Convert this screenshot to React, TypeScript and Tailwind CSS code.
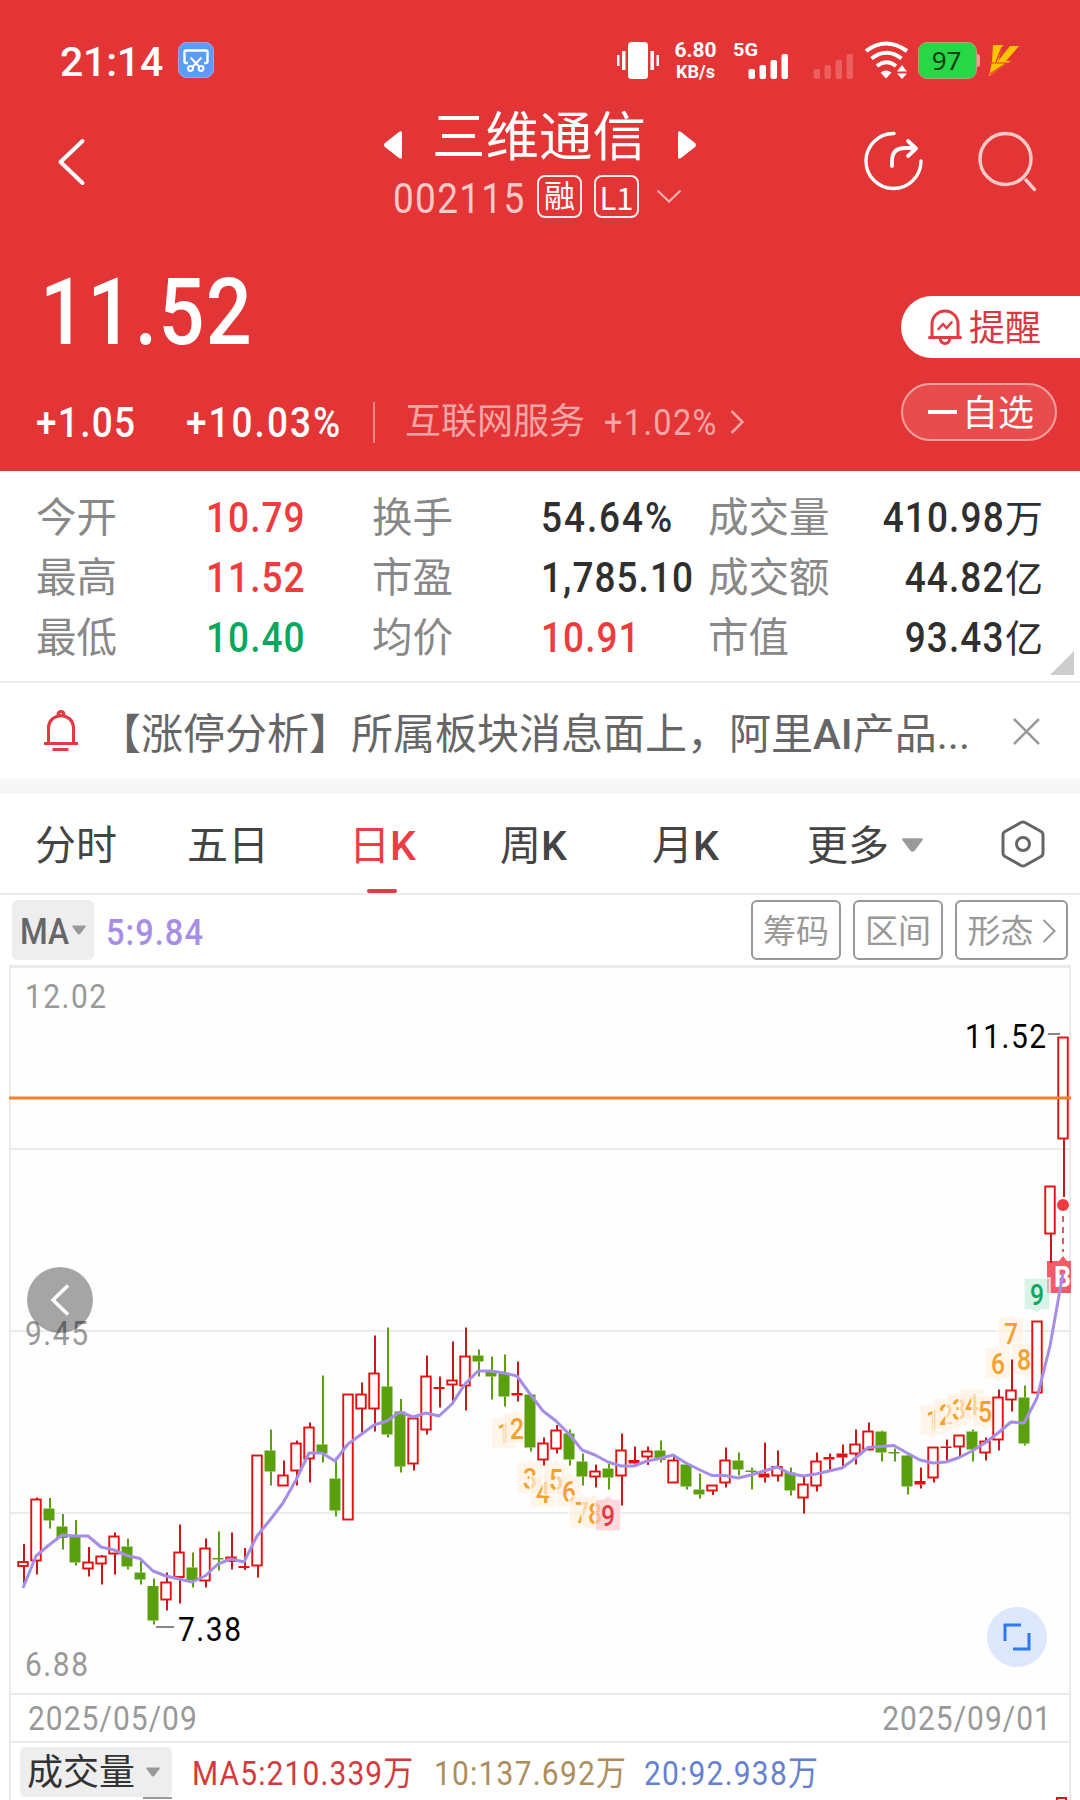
import type { ReactNode } from 'react';

type Candle = [high: number, low: number, top: number, bottom: number, kind: 'r' | 'g' | 'f'];

// r = hollow rising, g = falling, f = flat rising (filled)
const candles: Candle[] = [
  [1544, 1583, 1562, 1566, 'r'], [1497.5, 1574.5, 1499.5, 1560.5, 'r'], [1498, 1528.5, 1508.5, 1520.5, 'g'],
  [1514, 1549.5, 1526.5, 1538, 'g'], [1520, 1565.5, 1537, 1562.5, 'g'], [1547, 1576.5, 1562.5, 1568.5, 'r'],
  [1555, 1584.5, 1556.5, 1563.5, 'r'], [1532.5, 1574.5, 1536.5, 1553.5, 'r'], [1538.5, 1569.5, 1546.5, 1566.5, 'g'],
  [1561, 1584.5, 1572.5, 1579.5, 'g'], [1578.5, 1624.5, 1586, 1620.5, 'g'], [1572.5, 1610.5, 1582.5, 1599.5, 'r'],
  [1524.5, 1603.5, 1552.5, 1577, 'r'], [1552.5, 1587.5, 1567.5, 1580, 'g'], [1538.5, 1587.5, 1548.5, 1580.5, 'r'],
  [1531.5, 1570.5, 1558, 1559, 'g'], [1532.5, 1569.5, 1557.5, 1561, 'r'], [1548, 1570, 1566, 1568, 'f'],
  [1455.5, 1577.5, 1455.5, 1565.5, 'r'], [1429.5, 1485.5, 1450.5, 1471.5, 'g'], [1460.5, 1485.5, 1475.5, 1485.5, 'r'],
  [1440.5, 1485.5, 1443.5, 1470.5, 'r'], [1422.5, 1482.5, 1427.5, 1458.5, 'r'], [1375.5, 1462.5, 1444.5, 1453.5, 'g'],
  [1457.5, 1516.5, 1478.5, 1510.5, 'g'], [1394.5, 1519.5, 1394.5, 1519.5, 'r'], [1382.5, 1433, 1394.5, 1408.5, 'r'],
  [1335.5, 1431.5, 1373.5, 1408.5, 'r'], [1327.5, 1437.5, 1386.5, 1434.5, 'g'], [1399, 1472.5, 1411.5, 1466.5, 'g'],
  [1418.5, 1470.5, 1418.5, 1463.5, 'r'], [1355.5, 1434.5, 1376.5, 1429.5, 'r'], [1376.5, 1407.5, 1387, 1389, 'f'],
  [1341.5, 1401, 1380.5, 1384.5, 'r'], [1327.5, 1410.5, 1356.5, 1385.5, 'r'], [1349.5, 1376.5, 1355.5, 1361.5, 'g'],
  [1356.5, 1399.5, 1371, 1376.5, 'g'], [1354.5, 1406.5, 1373.5, 1396.5, 'g'], [1361.5, 1401.5, 1393, 1395.5, 'f'],
  [1394.5, 1451.5, 1394.5, 1447.5, 'g'], [1437.5, 1465.5, 1443.5, 1459.5, 'r'], [1425, 1453.5, 1430.5, 1448.5, 'r'],
  [1429.5, 1465.5, 1433.5, 1459.5, 'g'], [1453.5, 1485.5, 1461.5, 1476.5, 'g'], [1464.5, 1487.5, 1471.5, 1476.5, 'r'],
  [1464, 1489.5, 1468.5, 1477.5, 'g'], [1433.5, 1505.5, 1450.5, 1475.5, 'r'], [1446.5, 1465, 1460, 1463.5, 'f'],
  [1446.5, 1465, 1451.5, 1456.5, 'r'], [1440.5, 1462.5, 1450.5, 1460, 'g'], [1457, 1482.5, 1460.5, 1482.5, 'r'],
  [1463, 1489.5, 1464.5, 1486.5, 'g'], [1473.5, 1498.5, 1489.5, 1494.5, 'g'], [1485, 1495, 1485.5, 1490.5, 'r'],
  [1447.5, 1487.5, 1460.5, 1482.5, 'r'], [1452.5, 1475.5, 1460.5, 1469.5, 'g'], [1467.5, 1489.5, 1470.5, 1471.5, 'g'],
  [1442.5, 1482.5, 1473.5, 1477.5, 'f'], [1450.5, 1481.5, 1467, 1475.5, 'r'], [1467.5, 1495.5, 1472.5, 1490.5, 'g'],
  [1477, 1513.5, 1484.5, 1497.5, 'r'], [1452.5, 1491.5, 1461.5, 1485.5, 'r'], [1453.5, 1470, 1457, 1459.5, 'f'],
  [1444.5, 1467, 1453.5, 1457.5, 'f'], [1429.5, 1464.5, 1444.5, 1453.5, 'r'], [1422.5, 1449, 1431.5, 1449.5, 'r'],
  [1430.5, 1461.5, 1431.5, 1452.5, 'g'], [1448.5, 1461.5, 1452, 1453, 'g'], [1453, 1494.5, 1455.5, 1486.5, 'g'],
  [1467.5, 1488.5, 1481, 1484.5, 'f'], [1447.5, 1482.5, 1447.5, 1477.5, 'r'], [1439.5, 1461.5, 1446.5, 1447.5, 'f'],
  [1435.5, 1457, 1435.5, 1446.5, 'r'], [1429.5, 1461.5, 1431.5, 1449.5, 'g'], [1437.5, 1460.5, 1441.5, 1452.5, 'r'],
  [1389.5, 1450.5, 1397.5, 1439.5, 'r'], [1359.5, 1411.5, 1390.5, 1399.5, 'r'], [1385.5, 1445.5, 1397.5, 1443.5, 'g'],
  [1321.5, 1392.5, 1321.5, 1392.5, 'r'], [1186.5, 1263, 1186.5, 1233.5, 'r'], [1037.5, 1197, 1037.5, 1138.5, 'r'],
];

const ma5 = [
  1588, 1556, 1545, 1535, 1536, 1536, 1547, 1550, 1555.5, 1558.5, 1571, 1576, 1579, 1582, 1576, 1564, 1559, 1562,
  1536, 1520, 1503, 1480, 1453, 1453, 1461, 1444, 1434.5, 1425, 1421, 1412, 1417, 1413, 1416, 1404, 1384, 1371,
  1371, 1373, 1376, 1394, 1411, 1421, 1434, 1450, 1455, 1462, 1466, 1466, 1461, 1458.5, 1455, 1463, 1469.5, 1475.5,
  1475.5, 1478, 1475, 1471, 1467, 1473.5, 1476, 1474, 1471, 1468, 1458.5, 1447.5, 1446.5, 1445.5, 1453, 1460, 1463,
  1462, 1457.5, 1451, 1443, 1433, 1422, 1423, 1398, 1346, 1273,
];

const cx = (i: number) => 23 + i * 13;

// [candle index, digit, box top, pointer direction]
const marks: [number, string, number, 'up' | 'down'][] = [
  [37, '1', 1417, 'up'], [38, '2', 1412, 'up'], [39, '3', 1462, 'up'], [40, '4', 1476, 'up'], [41, '5', 1463, 'up'],
  [42, '6', 1475, 'up'], [43, '7', 1496, 'up'], [44, '8', 1497, 'up'], [45, '9', 1499, 'up'],
  [70, '1', 1404, 'down'], [71, '2', 1398, 'down'], [72, '3', 1393, 'down'], [73, '4', 1388, 'down'],
  [74, '5', 1395, 'down'], [75, '6', 1347, 'down'], [76, '7', 1317, 'down'], [77, '8', 1343, 'down'],
  [78, '9', 1278, 'down'],
];

const markColor = (i: number) =>
  i === 45 ? ['#fbc6cb', '#e33a48'] : i === 78 ? ['#c3ecda', '#0da761'] : ['#fff0e1', '#f5a02c'];

function Mark({ i, digit, y, dir }: { i: number; digit: string; y: number; dir: 'up' | 'down' }) {
  const x = cx(i);
  const [bg, fg] = markColor(i);
  const d =
    dir === 'up'
      ? `M${x - 13} ${y}h9l4-4 4 4h9v32h-26z`
      : `M${x - 13} ${y}h26v32h-9l-4 4-4-4h-9z`;
  return (
    <g>
      <path d={d} fill={bg} fillOpacity={0.65} stroke="#fff" strokeOpacity={0.8} strokeWidth={1.5} />
      <text x={x} y={y + 27} fontSize={30} textAnchor="middle" fill={fg} fontWeight={500} textLength={14} lengthAdjust="spacingAndGlyphs">
        {digit}
      </text>
    </g>
  );
}

function Label({ x, y, w, fill, children }: { x: number; y: number; w: number; fill: string; children: string }) {
  return (
    <text transform={`translate(${x} ${y}) scale(0.88 1)`} fontSize={34} fill={fill} textLength={w / 0.88} lengthAdjust="spacing">
      {children}
    </text>
  );
}

function Chart() {
  return (
    <svg className="block h-[730px] w-[1080px] font-[Roboto,'Liberation_Sans',sans-serif]" viewBox="0 965 1080 730">
      <rect x="10" y="966" width="1060" height="728" fill="#fefefe" />
      <g fill="#ebebeb">
        <rect x="9" y="965" width="1062" height="3" />
        <rect x="9" y="965" width="2" height="730" />
        <rect x="1069" y="965" width="2" height="730" />
        <rect x="10" y="1148" width="1060" height="2" />
        <rect x="10" y="1330" width="1060" height="2" />
        <rect x="10" y="1512" width="1060" height="2" />
        <rect x="9" y="1693" width="1062" height="2" />
      </g>
      <Label x={25} y={1008} w={81} fill="#999">12.02</Label>
      <Label x={25} y={1345} w={63} fill="#999">9.45</Label>
      <Label x={25} y={1676} w={63} fill="#999">6.88</Label>

      <path d="M1047 1261h12l4-5 4 5h4v32h-24z" fill="#f45b69" />
      <text x="1054" y="1287" fontSize="29" fontWeight="700" fill="#fff" textLength="17" lengthAdjust="spacingAndGlyphs">B</text>
      {marks.map(([i, digit, y, dir]) => (
        <Mark key={i} i={i} digit={digit} y={y} dir={dir} />
      ))}

      {candles.map(([high, low, top, bottom, kind], i) => {
        const x = cx(i);
        const color = kind === 'g' ? '#5a9f0c' : '#e60f0f';
        const h = bottom - top;
        return (
          <g key={i}>
            {high < top && <rect x={x} y={high} width="2" height={top - high} fill={kind === 'g' ? color : '#c91818'} />}
            {low > bottom && <rect x={x} y={bottom} width="2" height={low - bottom} fill={kind === 'g' ? color : '#c91818'} />}
            {kind === 'r' ? (
              <rect x={x - 4.75} y={top} width="9.5" height={h} fill="#fff" fillOpacity={0.9} stroke={color} strokeWidth="1.9" />
            ) : (
              <rect x={x - 5.5} y={top} width="11" height={Math.max(h, 1.5)} fill={color} />
            )}
          </g>
        );
      })}

      <rect x="9" y="1096.5" width="1062" height="3" fill="#f5822b" />
      <circle cx="1063" cy="1205" r="6" fill="#f03a45" />
      <path d="M1063 1216v36" stroke="#e4566a" strokeWidth="2" strokeDasharray="6 5" />
      <polyline
        points={ma5.map((y, i) => `${cx(i)},${y}`).join(' ')}
        fill="none"
        stroke="#a68ee6"
        strokeWidth="3"
        strokeLinejoin="round"
      />

      <path d="M1048 1034h12M156 1627h18" stroke="#888" strokeWidth="2" />
      <Label x={965} y={1048} w={81} fill="#000">11.52</Label>
      <Label x={178} y={1641} w={63} fill="#000">7.38</Label>
    </svg>
  );
}

function Caret({ className }: { className: string }) {
  return (
    <svg className={className} viewBox="0 0 20 13" fill="#999">
      <path d="M1.5 0h17q2 0 1 2l-7.500 10q-2 2-4 0L.5 2q-1-2 1-2z" />
    </svg>
  );
}

// Narrow numerals, squeezed toward their left edge
function Num({ children, className = '' }: { children: ReactNode; className?: string }) {
  return <span className={`inline-block origin-left scale-x-[0.88] whitespace-nowrap ${className}`}>{children}</span>;
}

function StatusBar() {
  return (
    <div className="flex h-[102px] items-center pt-[18px] pl-[60px] text-white">
      <span className="w-[118px] pt-1 text-[41px] leading-none font-medium tracking-[-0.2px]">21:14</span>
      <svg className="h-9 w-9" viewBox="0 0 36 36" fill="none" stroke="#fff" strokeWidth="2.4">
        <rect x=".5" y=".5" width="35" height="35" rx="8" fill="#5b9cf8" stroke="#a4a5e0" strokeWidth="1" />
        <path d="M10 21H8q-1.500 0-1.500-1.500V10q0-1.500 1.500-1.500h20q1.500 0 1.500 1.500v9.500q0 1.500-1.500 1.500h-2" />
        <path d="M12.500 15.500l9.500 10M23.500 15.500l-9.500 10" strokeWidth="2" />
        <circle cx="12.500" cy="26.500" r="2.400" strokeWidth="2" />
        <circle cx="23" cy="26.500" r="2.400" strokeWidth="2" />
      </svg>
      <svg className="ml-[403px] h-[38px] w-[43px]" viewBox="0 0 43 38" fill="#fff">
        <rect x="11" y="1" width="20" height="37" rx="3.500" />
        <rect x="0" y="14" width="2.500" height="11" />
        <rect x="5" y="10" width="3.500" height="19" />
        <rect x="33.500" y="10" width="3.500" height="19" />
        <rect x="39.500" y="14" width="2.500" height="11" />
      </svg>
      <div className="ml-[13px] w-[45px] pt-0.5 text-center text-[21px] leading-[21px] font-bold">
        <div>6.80</div>
        <div className="text-[18px] whitespace-nowrap">KB/s</div>
      </div>
      <svg className="ml-[15px] h-[38px] w-[120px] overflow-visible" viewBox="0 0 120 38" fill="#fff">
        <text x="0" y="14.500" fontSize="19" fontWeight="700" textLength="25" lengthAdjust="spacingAndGlyphs">5G</text>
        <rect x="15.500" y="28" width="6.500" height="10" rx="2" />
        <rect x="26.500" y="24" width="6.500" height="14" rx="2" />
        <rect x="37.500" y="19" width="6.500" height="19" rx="2" />
        <rect x="48.500" y="13" width="6.500" height="25" rx="2" />
        <g fill="#eb5f5f">
          <rect x="80.500" y="28" width="6.500" height="10" rx="2" />
          <rect x="91.500" y="24" width="6.500" height="14" rx="2" />
          <rect x="102.500" y="19" width="6.500" height="19" rx="2" />
          <rect x="113.500" y="13" width="6.500" height="25" rx="2" />
        </g>
      </svg>
      <svg className="ml-[11px] h-[38px] w-[46px]" viewBox="0 0 46 38" fill="none" stroke="#fff" strokeWidth="4">
        <path d="M2 10q20-15 41 0M7.500 17.500q15-11.500 30 0M13 25q9.500-7.500 19 0" />
        <path d="M16.500 31.500q5.500-4 11 0L22 37.500z" fill="#fff" stroke="none" />
        <path d="M38 24l5 6.500h-10zM38 38l5-5.500h-10z" fill="#fff" stroke="none" />
      </svg>
      <div className="ml-2 flex h-[37px] w-[59px] items-center justify-center rounded-[9px] border border-[#b9a07a] bg-[#28d745] text-[26px] text-[#0b3d12]">
        <span className="-ml-0.5 font-['Noto_Sans'] leading-none">97</span>
      </div>
      <div className="h-[13px] w-[3px] rounded-r bg-[#f09a9a]" />
      <svg className="ml-[9px] h-8 w-8" viewBox="0 0 32 32" fill="#ffc400">
        <path d="M4 1h10L9 17l12-15h9L17 17h5L0 32l3-14z" />
        <path d="M13 3L7 18M3 19h15L1 30" fill="none" stroke="#e33536" strokeWidth="1.200" />
      </svg>
    </div>
  );
}

function Tag({ children }: { children: ReactNode }) {
  return (
    <span className="flex h-[43px] w-[45px] items-center justify-center rounded-[8px] border-2 border-white/90 text-[31px] leading-none text-white">
      {children}
    </span>
  );
}

function NavBar() {
  return (
    <div className="flex h-[120px] items-center text-white">
      <svg className="ml-[57px] h-[50px] w-[30px]" viewBox="0 0 30 50" fill="none" stroke="#fff" strokeWidth="4" strokeLinecap="round" strokeLinejoin="round">
        <path d="M25.500 4L3.500 25l22 21" />
      </svg>
      <div className="ml-[297px] w-[312px]">
        <div className="flex h-[68px] items-center">
          <svg className="mt-[18px] h-7 w-[18px]" viewBox="0 0 18 28" fill="#fff">
            <path d="M15 1q3-2 3 1v24q0 3-3 1L1 16q-2-2 0-4z" />
          </svg>
          <span className="mt-1 ml-[30px] w-[214px] text-[53.500px] leading-none whitespace-nowrap">三维通信</span>
          <svg className="mt-[18px] ml-8 h-7 w-[18px]" viewBox="0 0 18 28" fill="#fff">
            <path d="M3 1Q0-1 0 2v24q0 3 3 1l14-11q2-2 0-4z" />
          </svg>
        </div>
        <div className="flex h-[52px] items-center pl-[9px]">
          <span className="w-[144px] pt-1.5 text-[42px] leading-none text-[#fcc9c9]">
            <Num className="tracking-[1.500px]">002115</Num>
          </span>
          <Tag>融</Tag>
          <span className="w-3" />
          <Tag>
            <span className="font-['Noto_Sans_CJK_SC']">L1</span>
          </Tag>
          <svg className="ml-[17px] h-[14px] w-[26px]" viewBox="0 0 26 14" fill="none" stroke="#f7b5b5" strokeWidth="2">
            <path d="M1.500 1.500L13 12.500l11.500-11" />
          </svg>
        </div>
      </div>
      <svg className="-mt-0.5 ml-[167px] h-[62px] w-[62px]" viewBox="0 0 62 62" fill="none" stroke="#fff" strokeWidth="3.400" strokeLinecap="round" strokeLinejoin="round">
        <path d="M31 3.500A27.500 27.500 0 1 0 58 31" />
        <path d="M29 36v-5q0-13 13-13h10M45 11l8 7.500-8 7.500" strokeWidth="3.800" />
      </svg>
      <svg className="ml-[52px] h-[62px] w-[62px]" viewBox="0 0 62 62" fill="none" stroke="#fcc9c9" strokeWidth="3.400" strokeLinecap="round">
        <circle cx="28.500" cy="28" r="25.500" />
        <path d="M49 49l8.500 9.500" />
      </svg>
    </div>
  );
}

function Quote() {
  return (
    <div className="flex h-[249px] justify-between">
      <div>
        <div className="flex h-[178px] items-center pt-1 pl-10 text-[92px] font-medium text-white">
          <Num className="tracking-[1.500px]">11.52</Num>
        </div>
        <div className="flex h-11 items-center text-[42px] leading-none font-medium whitespace-nowrap text-white">
          <span className="ml-9 w-[150px] pt-0.5">
            <Num className="tracking-[1.500px]">+1.05</Num>
          </span>
          <span className="w-[187px] pt-0.5">
            <Num className="tracking-[2.300px]">+10.03%</Num>
          </span>
          <span className="h-[41px] w-[2px] bg-[#ee8888]" />
          <span className="ml-[30px] w-[199px] text-[36px] font-normal text-[#f4a6a6]">互联网服务</span>
          <span className="w-[126px] text-[37px] font-normal text-[#f4a6a6]">
            <Num className="tracking-[1.500px]">+1.02%</Num>
          </span>
          <svg className="h-6 w-[14px]" viewBox="0 0 14 24" fill="none" stroke="#f4a6a6" strokeWidth="2.500">
            <path d="M1.500 1l11 11-11 11" />
          </svg>
        </div>
      </div>
      <div className="w-[179px] pt-[74px]">
        <div className="flex h-[62px] items-center rounded-l-full bg-white pl-[26px] text-[36px] leading-none text-[#d8393f]">
          <svg className="h-[36px] w-[36px]" viewBox="0 0 36 36" fill="none" stroke="#e33a44" strokeWidth="3" strokeLinecap="round" strokeLinejoin="round">
            <path d="M5 27V15a13 13 0 0 1 26 0v12M2.500 28.500h31M13 29.500q1 5 5 5t5-5" />
            <path d="M11.500 20l4.500-5 3.500 4 5-5.500" strokeWidth="2.600" />
          </svg>
          <span className="ml-1.5 pt-1">提醒</span>
        </div>
        <div className="mt-[25px] flex h-[58px] w-[156px] items-center rounded-full border-2 border-[#f3a0a0] bg-[#e84c4c] pl-[25px] text-[36px] leading-none text-white">
          <span className="mr-[5px] h-[4px] w-[29px] bg-white" />
          <span className="pt-1">自选</span>
        </div>
      </div>
    </div>
  );
}

const stats = [
  ['今开', '10.79', 'tracking-[1.200px] text-[#ee3b3b]', '换手', '54.64%', 'tracking-[2.200px] text-[#2f2f2f]', '成交量', '410.98万'],
  ['最高', '11.52', 'tracking-[1.200px] text-[#ee3b3b]', '市盈', '1,785.10', 'tracking-[1.200px] text-[#2f2f2f]', '成交额', '44.82亿'],
  ['最低', '10.40', 'tracking-[1.200px] text-[#09a85e]', '均价', '10.91', 'tracking-[1.200px] text-[#ee3b3b]', '市值', '93.43亿'],
];

function Stats() {
  return (
    <div className="relative h-[212px] border-b-2 border-[#ededed] pt-[17px] pl-9">
      {stats.map(([l1, v1, c1, l2, v2, c2, l3, v3]) => (
        <div key={l1} className="grid h-[60px] w-[1007px] grid-cols-[170px_166px_169px_167px_335px] items-center text-[40.500px] leading-none whitespace-nowrap text-[#888]">
          <span>{l1}</span>
          <Num className={`text-[42px] font-medium ${c1}`}>{v1}</Num>
          <span>{l2}</span>
          <Num className={`text-[42px] font-medium ${c2}`}>{v2}</Num>
          <span className="flex items-center justify-between">
            <span>{l3}</span>
            <span className="text-[#2f2f2f]">
              <span className="inline-block origin-right scale-x-[0.88] text-[42px] font-medium tracking-[1.300px]">{v3.slice(0, -1)}</span>
              <span className="text-[38px]">{v3.slice(-1)}</span>
            </span>
          </span>
        </div>
      ))}
      <svg className="absolute right-[6px] bottom-[6px] h-6 w-6" viewBox="0 0 24 24" fill="#ccc">
        <path d="M24 0v24H0z" />
      </svg>
    </div>
  );
}

function Notice() {
  return (
    <div className="flex h-24 items-center">
      <svg className="ml-[43px] h-[42px] w-[36px]" viewBox="0 0 36 42" fill="none" stroke="#e33a44" strokeWidth="3">
        <path d="M5.500 32V17.500Q6 7 18 5.500 30 7 30.500 17.500V32" />
        <path d="M1 33.500h34M9.500 39.500h16" />
        <path d="M15 5q0-3.500 3-3.500T21 5" />
      </svg>
      <span className="ml-5 w-[880px] pt-2 text-[42px] leading-none whitespace-nowrap text-[#666]">
        【涨停分析】所属板块消息面上，阿里<span className="font-medium">AI</span>产品...
      </span>
      <svg className="ml-[34px] h-[27px] w-[27px]" viewBox="0 0 27 27" stroke="#999" strokeWidth="2.500">
        <path d="M1 1l25 25M26 1L1 26" />
      </svg>
    </div>
  );
}

function Tabs() {
  return (
    <div className="relative flex h-[101px] items-center border-b-2 border-[#ebebeb] pl-[35px] text-[41px] leading-none text-[#444]">
      <span className="w-[152px] pt-1.5">分时</span>
      <span className="w-[162px] pt-1.5">五日</span>
      <span className="w-[151px] pt-1.5 text-[#ec3d45]">日<span className="font-medium">K</span></span>
      <span className="w-[152px] pt-1.5">周<span className="font-medium">K</span></span>
      <span className="w-[155px] pt-1.5">月<span className="font-medium">K</span></span>
      <span className="w-[95px] pt-1.5">更多</span>
      <Caret className="mt-0.5 h-[14px] w-[21px]" />
      <svg className="ml-[77px] h-[48px] w-[46px]" viewBox="0 0 46 48" fill="none" stroke="#666" strokeWidth="3" strokeLinejoin="round">
        <path d="M21 2.500q2-1 4 0L41 11.500q2 1 2 3.500v18q0 2.500-2 3.500L25 45.500q-2 1-4 0L5 36.500q-2-1-2-3.500V15q0-2.500 2-3.500z" />
        <circle cx="23" cy="24" r="6.500" />
      </svg>
      <span className="absolute bottom-0 left-[367px] h-1 w-[30px] rounded-sm bg-[#de3c46]" />
    </div>
  );
}

function OutlineButton({ children, className }: { children: ReactNode; className: string }) {
  return (
    <button className={`flex h-[60px] items-center justify-center rounded-[6px] border-2 border-[#999] pt-0.5 text-[33px] leading-none text-[#999] ${className}`}>
      {children}
    </button>
  );
}

function IndicatorBar() {
  return (
    <div className="flex h-[70px] items-center pl-3">
      <div className="flex h-[60px] w-[82px] items-center rounded-[6px] bg-[#eee] pl-2 text-[36px] leading-none font-medium text-[#666]">
        <span className="w-[52px] pt-1">
          <Num>MA</Num>
        </span>
        <Caret className="h-[10px] w-[14px]" />
      </div>
      <span className="ml-3 w-[645px] pt-1 text-[37px] leading-none font-medium text-[#a68ee6]">
        <Num className="tracking-[1.200px]">5:9.84</Num>
      </span>
      <OutlineButton className="w-[90px]">筹码</OutlineButton>
      <OutlineButton className="ml-3 w-[90px]">区间</OutlineButton>
      <OutlineButton className="ml-3 w-[113px]">
        形态
        <svg className="ml-2 h-6 w-[14px]" viewBox="0 0 14 24" fill="none" stroke="#999" strokeWidth="2">
          <path d="M1.500 1l11 11-11 11" />
        </svg>
      </OutlineButton>
    </div>
  );
}

export default function App() {
  return (
    <div className="h-[1800px] w-[1080px] overflow-hidden bg-white font-[Roboto,'Noto_Sans_CJK_SC',sans-serif]">
      <header className="h-[471px] bg-[#e33536]">
        <StatusBar />
        <NavBar />
        <Quote />
      </header>
      <Stats />
      <Notice />
      <div className="h-[15px] bg-[#f7f7f7]" />
      <Tabs />
      <IndicatorBar />
      <div className="relative">
        <Chart />
        <button className="absolute top-[302px] left-[27px] flex h-[66px] w-[66px] items-center justify-center rounded-full bg-black/35">
          <svg className="h-8 w-5" viewBox="0 0 20 32" fill="none" stroke="#fff" strokeWidth="3.500">
            <path d="M18 1.500L3 16l15 14.500" />
          </svg>
        </button>
        <button className="absolute top-[642px] left-[987px] flex h-[60px] w-[60px] items-center justify-center rounded-full bg-[#dde8fd]">
          <svg className="h-7 w-7" viewBox="0 0 28 28" fill="none" stroke="#2f78f0" strokeWidth="3">
            <path d="M2 18V2h16M26 10v16H10" />
          </svg>
        </button>
      </div>
      <div className="mx-[9px] flex h-12 items-center justify-between border-x-2 border-b-2 border-[#ebebeb] pr-[17px] pl-[17px] text-[34px] text-[#999]">
        <Num className="tracking-[1.200px]">2025/05/09</Num>
        <span className="inline-block origin-right scale-x-[0.88] tracking-[1.200px]">2025/09/01</span>
      </div>
      <div className="mx-[9px] h-[57px] border-x-2 border-[#ebebeb] pt-1 pl-[9px]">
        <div className="flex items-center text-[34px] leading-none whitespace-nowrap">
          <div className="flex h-[50px] w-[152px] items-center rounded-[6px] bg-[#eee] pl-[7px] text-[36px] text-[#333]">
            <span className="w-[119px] pt-0.5">成交量</span>
            <Caret className="h-[10px] w-[14px]" />
          </div>
          <span className="ml-5 w-[242px] pt-0.5 text-[#d5393d]">
            <Num className="tracking-[1.300px]">MA5:210.339万</Num>
          </span>
          <span className="w-[210px] pt-0.5 text-[#ae8d5b]">
            <Num className="tracking-[1.400px]">10:137.692万</Num>
          </span>
          <span className="pt-0.5 text-[#6480d3]">
            <Num className="tracking-[1.400px]">20:92.938万</Num>
          </span>
        </div>
        <div className="flex h-[3px] justify-between pr-[2px] pl-3">
          <span className="ml-[111px] h-[2px] w-[29px] bg-[#999]" />
          <span className="h-[3px] w-[11px] border-2 border-b-0 border-[#e60f0f]" />
        </div>
      </div>
    </div>
  );
}
